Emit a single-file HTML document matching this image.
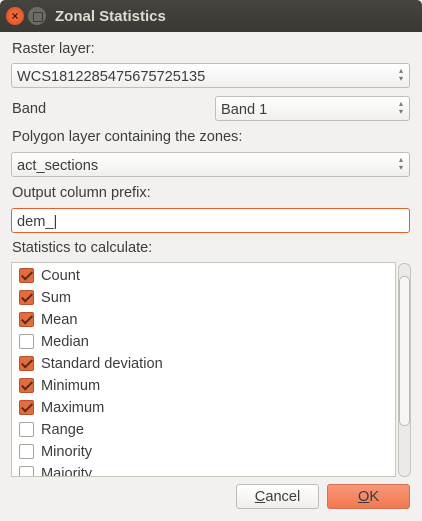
<!DOCTYPE html>
<html><head><style>
*{box-sizing:border-box}
body{margin:0;width:422px;height:521px;background:#f2f1f0;font-family:"Liberation Sans",sans-serif;font-size:14.6px;color:#3c3c3c;position:relative;overflow:hidden}
.tb{position:absolute;left:0;top:0;width:422px;height:32px;background:linear-gradient(#45443f,#3a3935);border-radius:5px 5px 0 0}
.tb .t{position:absolute;left:55px;top:8px;color:#dfdbd2;font-weight:bold;font-size:15px}
.cl{position:absolute;left:6px;top:7px;width:18px;height:18px;border-radius:50%;background:radial-gradient(#f6774a,#dd4814);color:#3a1d0e;font-size:12px;text-align:center;line-height:18px;font-weight:bold}
.mx{position:absolute;left:28px;top:7px;width:18px;height:18px;border-radius:50%;background:#6c6b66}
.mx:after{content:"";position:absolute;left:5px;top:5px;width:8px;height:8px;border:1px solid #3a3935;border-radius:1px}
.l{position:absolute;left:12px}
.cb{position:absolute;height:25px;border:1px solid #c2bdb6;border-radius:3px;background:linear-gradient(#fff,#f0efed);padding:3px 5px 0;line-height:20px;color:#3c3c3c}
.cb:after{content:"▴\A▾";white-space:pre;position:absolute;right:6px;top:3px;font-size:8px;line-height:8px;color:#777}
.in{position:absolute;left:11px;top:208px;width:399px;height:25px;border:1px solid #e2622e;border-radius:3px;background:#fff;padding:3px 5px 0;line-height:20px}
.list{position:absolute;left:11px;top:262px;width:385px;height:215px;border:1px solid #c8c4be;background:#fff;overflow:hidden}
.it{position:absolute;left:7px;height:16px}
.ck{position:absolute;left:0;top:1px;width:15px;height:15px;border-radius:2px;border:1px solid #a9a49d;background:#fff}
.ck.on{background:#e36b3e;border-color:#b85330}
.ck.on:after{content:"";position:absolute;left:4px;top:0px;width:4px;height:9px;border:solid #5a2a16;border-width:0 2px 2px 0;transform:rotate(45deg)}
.it span{position:absolute;left:22px;top:1px;white-space:nowrap}
.sb{position:absolute;left:398px;top:263px;width:13px;height:214px;border:1px solid #c8c4be;border-radius:6px;background:#eceae7}
.th{position:absolute;left:0;top:12px;width:11px;height:150px;border:1px solid #bcb7b0;border-radius:5px;background:#f7f6f5}
.btn{position:absolute;top:484px;height:25px;border:1px solid #c0bbb4;border-radius:3px;text-align:center;padding-top:2px;line-height:21px}
</style></head><body>
<div class="tb"><div class="cl">×</div><div class="mx"></div><div class="t">Zonal Statistics</div></div>
<div class="l" style="top:41px">Raster layer:</div>
<div class="cb" style="left:11px;top:63px;width:399px">WCS1812285475675725135</div>
<div class="l" style="top:101px">Band</div>
<div class="cb" style="left:215px;top:96px;width:195px">Band 1</div>
<div class="l" style="top:129px">Polygon layer containing the zones:</div>
<div class="cb" style="left:11px;top:152px;width:399px">act_sections</div>
<div class="l" style="top:185px">Output column prefix:</div>
<div class="in">dem_|</div>
<div class="l" style="top:240px">Statistics to calculate:</div>
<div class="list">
<div class="it" style="top:4px"><div class="ck on"></div><span>Count</span></div>
<div class="it" style="top:26px"><div class="ck on"></div><span>Sum</span></div>
<div class="it" style="top:48px"><div class="ck on"></div><span>Mean</span></div>
<div class="it" style="top:70px"><div class="ck"></div><span>Median</span></div>
<div class="it" style="top:92px"><div class="ck on"></div><span>Standard deviation</span></div>
<div class="it" style="top:114px"><div class="ck on"></div><span>Minimum</span></div>
<div class="it" style="top:136px"><div class="ck on"></div><span>Maximum</span></div>
<div class="it" style="top:158px"><div class="ck"></div><span>Range</span></div>
<div class="it" style="top:180px"><div class="ck"></div><span>Minority</span></div>
<div class="it" style="top:202px"><div class="ck"></div><span>Majority</span></div>
</div>
<div class="sb"><div class="th"></div></div>
<div class="btn" style="left:236px;width:83px;background:linear-gradient(#fff,#efeeec)"><u>C</u>ancel</div>
<div class="btn" style="left:327px;width:83px;background:linear-gradient(#f8977a,#f1784f);border-color:#d2714e"><u>O</u>K</div>
</body></html>
